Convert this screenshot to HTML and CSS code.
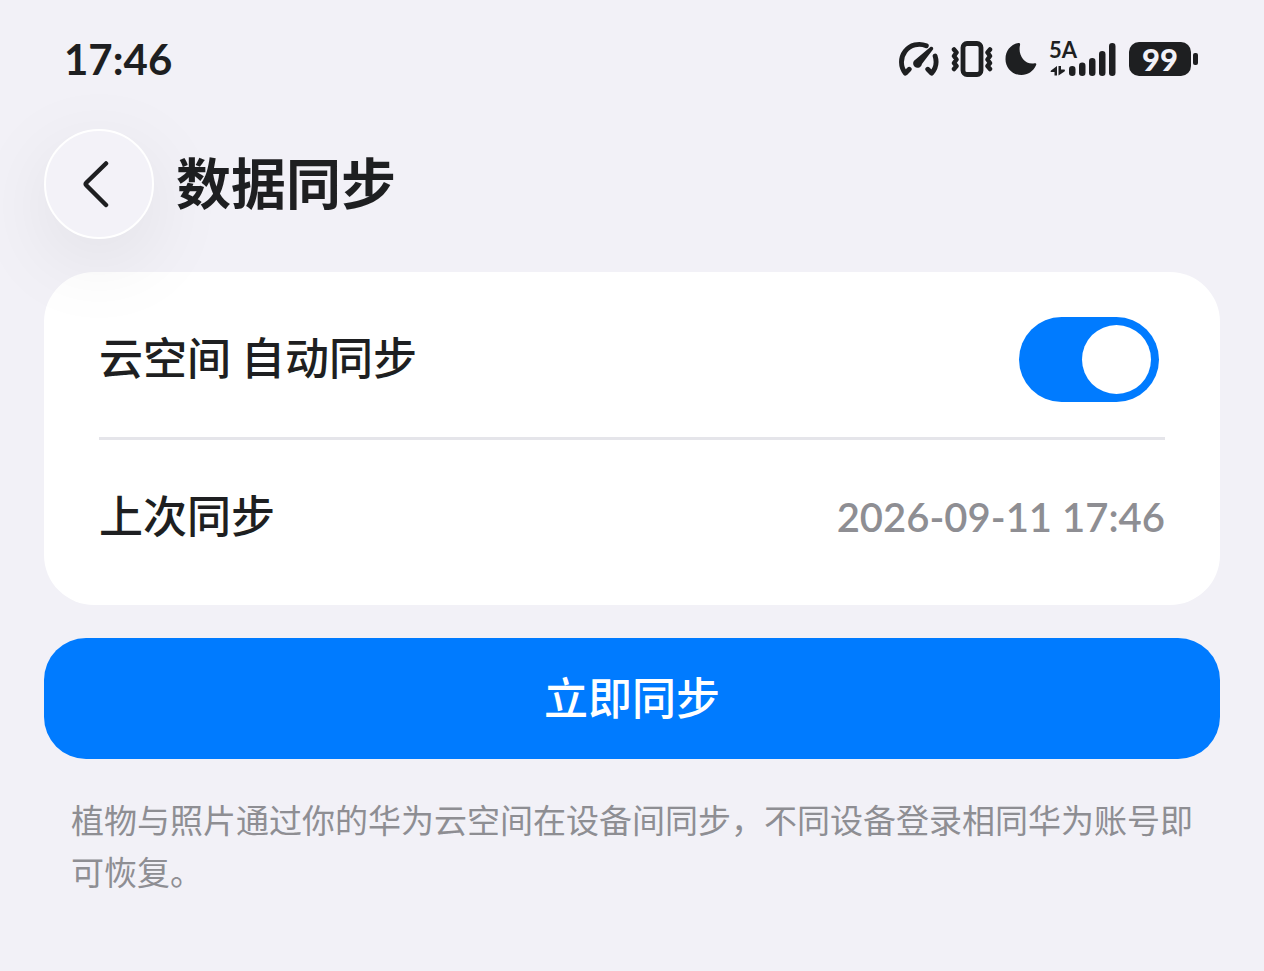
FILE: index.html
```html
<!DOCTYPE html>
<html lang="zh-CN">
<head>
<meta charset="utf-8">
<meta name="viewport" content="width=device-width, initial-scale=1">
<title>数据同步</title>
<link rel="stylesheet" href="styles.css">
</head>
<body>
<div class="status">
  <time class="clock">17:46</time>
  <div class="indicators">
    <svg width="41" height="36" viewBox="0 0 42 36" aria-hidden="true">
      <path d="M29 4.500A18.200 18.200 0 0 0 7.500 32.500L11.500 28.500M38 15A18.200 18.200 0 0 1 34.500 32.500L30.500 28.500" fill="none" stroke="#1e1f21" stroke-width="5" stroke-linecap="round" stroke-linejoin="round"/>
      <path d="M18 18.500L33.500 5.500Q36.500 5 36 8L24.500 23A4.500 4.500 0 1 1 18 18.500Z" fill="#1e1f21"/>
    </svg>
    <svg width="42" height="36" viewBox="0 0 42 36" aria-hidden="true">
      <g fill="none" stroke="#1e1f21" stroke-linecap="round" stroke-linejoin="round">
        <rect x="12" y="2.500" width="18" height="31" rx="4" stroke-width="4.800"/>
        <path d="M3 8.500L5.500 11.500L3 15L5.500 18.500L3 22L5.500 25L3 28M39 8.500L36.500 11.500L39 15L36.500 18.500L39 22L36.500 25L39 28" stroke-width="4.500"/>
      </g>
    </svg>
    <svg width="32" height="36" viewBox="0 0 33 36" aria-hidden="true">
      <path d="M14 1.500Q16 1.300 15.500 3.500C13 14 20.500 24.500 30.500 22.500Q33 22 32 24.500C29 31 23.500 34.500 17 34.500C7.500 34.500 .500 27 .500 18.200C.500 9.500 6 3 14 1.500Z" fill="#1e1f21"/>
    </svg>
    <svg width="68" height="56" viewBox="0 -10 68 56" role="img" aria-label="5A">
      <g fill="#1e1f21">
        <text x="0" y="17" class="network">5A</text>
        <path d="M8 25V34.500H5.500V31H2Q1 30.500 2 29.500Z"/>
        <path d="M9.500 25H12V28.500H15.500Q16.500 29.500 15.500 30.500L9.500 34.500Z"/>
        <rect x="20" y="25" width="6.500" height="10" rx="3.200"/>
        <rect x="30" y="21.500" width="6.500" height="13.500" rx="3.200"/>
        <rect x="40" y="17" width="6.500" height="18" rx="3.200"/>
        <rect x="50" y="10" width="6.500" height="25" rx="3.200"/>
        <rect x="60" y="2" width="6.500" height="33" rx="3.200"/>
      </g>
    </svg>
    <div class="battery"><span class="level">99</span><span class="tip"></span></div>
  </div>
</div>
<header class="header">
  <button class="back" type="button" aria-label="返回">
    <svg width="28" height="48" viewBox="0 0 28 48" aria-hidden="true"><path d="M25 3.500L5.500 22.500Q4 24 5.500 25.500L25 45" fill="none" stroke="#1e1f21" stroke-width="4.500" stroke-linecap="round" stroke-linejoin="round"/></svg>
  </button>
  <h1 class="title">数据同步</h1>
</header>
<main class="content">
  <section class="card">
    <div class="row">
      <label class="name" for="auto">云空间 自动同步</label>
      <input class="switch" id="auto" type="checkbox" role="switch" checked>
    </div>
    <div class="row">
      <span class="name">上次同步</span>
      <time class="value">2026-09-11 17:46</time>
    </div>
  </section>
  <button class="sync" type="button">立即同步</button>
  <p class="note">植物与照片通过你的华为云空间在设备间同步，不同设备登录相同华为账号即可恢复。</p>
</main>
</body>
</html>
```
FILE: styles.css
```css
* { box-sizing: border-box; }

body {
  margin: 0;
  background: #f2f1f7;
  color: #1e1f21;
  font-family: "Noto Sans CJK SC", sans-serif;
}

.status {
  display: flex;
  justify-content: space-between;
  align-items: center;
  height: 118px;
  padding: 0 66px 0 64px;
}

.clock {
  font: 700 42px/48px Lato, sans-serif;
}

.indicators {
  display: flex;
  align-items: center;
  gap: 12px;
}

.network { font: 700 22px "Lato", sans-serif; }

.battery {
  display: flex;
  align-items: center;
  gap: 2px;
}

.level {
  width: 62px;
  border-radius: 10px;
  background: #1e1f21;
  color: #f2f1f7;
  font: 900 31px/34px Lato, sans-serif;
  text-align: center;
}

.tip {
  width: 5px;
  height: 12px;
  border-radius: 2px;
  background: #1e1f21;
}

.header {
  display: flex;
  align-items: center;
  gap: 22px;
  padding: 11px 44px 0;
}

.back {
  position: relative;
  z-index: 1;
  display: flex;
  align-items: center;
  justify-content: center;
  width: 110px;
  height: 110px;
  padding: 0 8px 0 0;
  border: 2px solid #fff;
  border-radius: 50%;
  background: #f3f2f8;
  color: #1e1f21;
  box-shadow: 0 22px 84px rgba(0, 0, 0, .08);
}

.title {
  margin: 0;
  padding-bottom: 8px;
  font-size: 55px;
  font-weight: 700;
  line-height: 80px;
}

.content { padding: 33px 44px; }

.card {
  padding: 9px 55px 11px;
  border-radius: 50px;
  background: #fff;
}

.row {
  display: flex;
  align-items: center;
  justify-content: space-between;
  min-height: 154px;
  font-size: 44px;
  font-weight: 500;
  line-height: 64px;
}

.row:first-child {
  min-height: 159px;
  border-bottom: 3px solid #e5e5ea;
}

.name { padding-bottom: 6px; }

.value {
  color: #8e8e93;
  font: 600 40px/48px Lato, sans-serif;
}

.switch {
  appearance: none;
  display: flex;
  align-items: center;
  justify-content: flex-end;
  width: 140px;
  height: 85px;
  margin: 0 6px 0 0;
  padding: 8px;
  border-radius: 43px;
  background: #007bff;
}

.switch::before {
  content: "";
  width: 69px;
  height: 69px;
  border-radius: 50%;
  background: #fff;
}

.switch:not(:checked) {
  justify-content: flex-start;
  background: #e5e5ea;
}

.sync {
  display: block;
  width: 100%;
  margin-top: 33px;
  padding: 26px 28px 30px;
  border: 0;
  border-radius: 42px;
  background: #007bff;
  color: #fff;
  font: 500 44px/65px "Noto Sans CJK SC", sans-serif;
}

.note {
  margin: 34px 22px 0 27px;
  color: #8e8e93;
  font-size: 33px;
  line-height: 52px;
}
```
